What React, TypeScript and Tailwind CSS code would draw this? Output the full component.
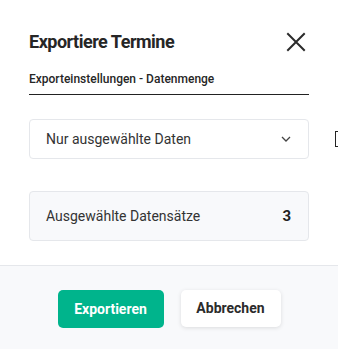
import React from "react";

export default function App() {
  return (
    <div className="relative w-[338px] h-[349px] bg-white font-['Roboto',sans-serif] text-[#2b2b2b] overflow-hidden">
      <div className="px-[29px] pt-[28px]">
        <div className="flex items-center justify-between h-[28px]">
          <h1 className="text-[18px] font-bold tracking-[-0.5px] leading-[28px] text-[#262626]">Exportiere Termine</h1>
          <svg width="20" height="20" viewBox="0 0 20 20" className="mr-[3px]">
            <path d="M2 2 L18 18 M18 2 L2 18" stroke="#2b2b2b" strokeWidth="2" strokeLinecap="square" />
          </svg>
        </div>
        <div className="mt-[14px] pb-[6px] border-b border-[#222] text-[12px] font-medium leading-[18px] text-[#262626]">
          Exporteinstellungen - Datenmenge
        </div>
        <div className="mt-[24px] h-[40px] rounded-[4px] border border-[#e5e7eb] flex items-center justify-between pl-[16px] pr-[17px]">
          <span className="text-[14px] text-[#333]">Nur ausgewählte Daten</span>
          <svg width="10" height="6" viewBox="0 0 10 6">
            <path d="M1 1 L5 5 L9 1" fill="none" stroke="#444" strokeWidth="1.3" />
          </svg>
        </div>
        <div className="mt-[32px] h-[50px] rounded-[4px] border border-[#e5e7eb] bg-[#f8f9fb] flex items-center justify-between pl-[16px] pr-[17px]">
          <span className="text-[14px] text-[#333]">Ausgewählte Datensätze</span>
          <span className="text-[15px] font-bold text-[#222]">3</span>
        </div>
      </div>
      <div className="mt-[24px] h-[90px] border-t border-[#e5e7eb] bg-[#f8f9fb] flex justify-center pt-[24px] gap-[17px]">
        <button className="w-[106px] h-[38px] rounded-[5px] bg-[#00b48c] text-white text-[14px] font-bold">Exportieren</button>
        <button className="w-[100px] h-[37px] rounded-[5px] bg-white text-[14px] font-bold text-[#2b2b2b] shadow-[0_1px_4px_rgba(0,0,0,0.12)]">Abbrechen</button>
      </div>
      <div className="absolute left-[335px] top-[131px] w-[4px] h-[16px] border-l border-t border-b border-[#222]" />
    </div>
  );
}
